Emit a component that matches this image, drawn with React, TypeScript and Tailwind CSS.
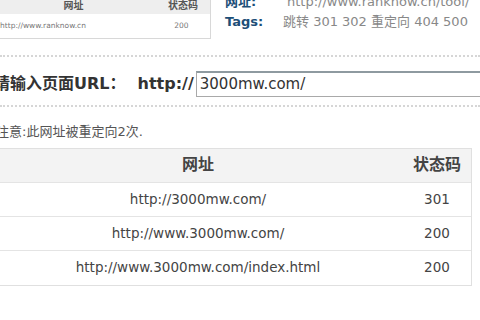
import React from "react";

const font = { fontFamily: '"DejaVu Sans", "Noto Sans CJK SC", sans-serif' };

function Dotted() {
  return <div className="w-full border-t-2 border-dotted border-[#d6d6d6]" />;
}

export default function App() {
  const rows = [
    ["http://3000mw.com/", "301"],
    ["http://www.3000mw.com/", "200"],
    ["http://www.3000mw.com/index.html", "200"],
  ];
  return (
    <div className="w-[480px] h-[320px] overflow-hidden bg-white text-[#444]" style={font}>
      <div className="flex -mt-[8px]">
        <div className="-ml-[10px] w-[221px] border border-[#d8d8d8] shrink-0">
          <div className="flex h-[21px] items-end bg-[#eeeeee] text-[10px] font-bold text-[#555]">
            <div className="w-[165px] text-center pb-[1px]">网址</div>
            <div className="flex-1 text-center pb-[1px]">状态码</div>
          </div>
          <div className="flex h-[24px] items-center text-[7.5px] text-[#777]">
            <div className="w-[170px] pl-[9px]">http://www.ranknow.cn</div>
            <div className="flex-1 text-center pr-[8px]">200</div>
          </div>
        </div>
        <div className="ml-[14px] flex flex-col text-[13px]">
          <div className="flex h-[20px] items-center">
            <span className="w-[62px] font-bold text-[#1d4f78]">网址:</span>
            <span className="text-[#888]">http://www.ranknow.cn/tool/</span>
          </div>
          <div className="flex h-[20px] items-center">
            <span className="w-[58px] font-bold text-[#1d4f78]">Tags:</span>
            <span className="text-[#888]">跳转 301 302 重定向 404 500</span>
          </div>
        </div>
      </div>

      <div className="mt-[16px]">
        <Dotted />
      </div>

      <div className="flex items-center pt-[14px] pb-[8px] -ml-[6px]">
        <span className="text-[16px] font-bold text-[#333]">请输入页面URL：</span>
        <span className="ml-[12px] text-[16px] font-bold text-[#333]">http://</span>
        <div className="ml-[2px] flex-1 h-[26px] border border-[#a9a9a9] border-t-[#8e9aa0] border-t-2 flex items-center pl-[3px] text-[15px] text-[#333] -mr-[10px]">
          3000mw.com/
        </div>
      </div>

      <Dotted />

      <div className="mt-[15px] -ml-[4px] text-[13px] text-[#555]">注意:此网址被重定向2次.</div>

      <div className="mt-[6px] -ml-[8px] w-[480px] border border-[#e0e0e0] text-[13.5px]">
        <div className="flex h-[34px] items-center bg-[#f3f3f3] border-b border-[#e4e4e4] text-[16px] font-bold text-[#444]">
          <div className="w-[410px] text-center">网址</div>
          <div className="flex-1 text-center">状态码</div>
        </div>
        {rows.map(([u, c], i) => (
          <div
            key={i}
            className={"flex h-[34px] items-center text-[#444] " + (i < rows.length - 1 ? "border-b border-[#e4e4e4]" : "")}
          >
            <div className="w-[410px] text-center">{u}</div>
            <div className="flex-1 text-center">{c}</div>
          </div>
        ))}
      </div>
    </div>
  );
}
